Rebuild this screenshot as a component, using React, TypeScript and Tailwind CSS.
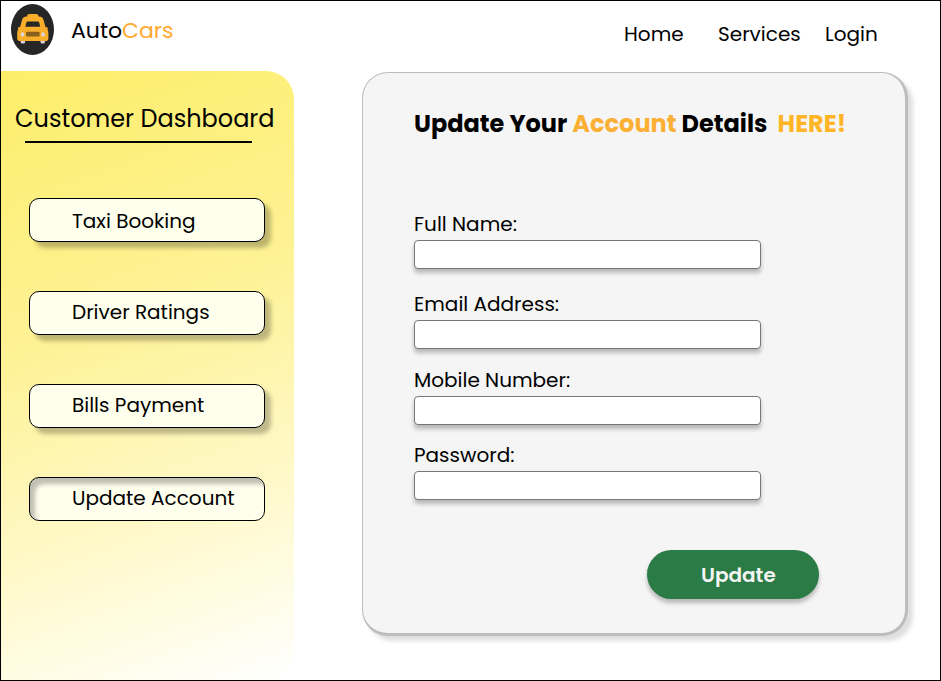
import React from "react";

const menu = [
  { label: "Taxi Booking", text: "pt-[2px]" },
  { label: "Driver Ratings", text: "" },
  { label: "Bills Payment", text: "" },
  { label: "Update Account", text: "", active: true },
];

const fields = [
  { label: "Full Name:", name: "fullName", type: "text", gap: "" },
  { label: "Email Address:", name: "email", type: "email", gap: "mt-[21px]" },
  { label: "Mobile Number:", name: "mobile", type: "tel", gap: "mt-[17px]" },
  { label: "Password:", name: "password", type: "password", gap: "mt-[16px]" },
];

function TaxiLogo() {
  return (
    <svg className="ml-[9px] mt-[2px] h-[52px] w-[44px] shrink-0" viewBox="0 0 44 52" aria-hidden="true">
      <ellipse cx="22.5" cy="26.5" rx="21.5" ry="25.4" fill="#262626" />
      <rect x="10.7" y="36" width="4.4" height="4.6" rx="1.6" fill="#d9d3e4" />
      <rect x="30.5" y="36" width="4.4" height="4.6" rx="1.6" fill="#d9d3e4" />
      <path
        d="M17.2 13.4V12.6Q17.4 11 19.2 11H26.4Q28.2 11 28.4 12.6V13.4H29.2Q32.4 13.4 33.4 16.6L35.6 24.6Q38.4 26.4 38.4 30.4V35.2Q38.4 38 35.6 38H10Q7.2 38 7.2 35.2V30.4Q7.2 26.4 10 24.6L12.2 16.6Q13.2 13.4 16.4 13.4Z"
        fill="#f9ae2b"
      />
      <circle cx="9.2" cy="25.2" r="1.2" fill="#f9ae2b" />
      <circle cx="36.4" cy="25.2" r="1.2" fill="#f9ae2b" />
      <path d="M18 18.4H27.6Q28.8 18.4 29.2 19.6L30.2 23.7H15.4L16.4 19.6Q16.8 18.4 18 18.4Z" fill="#262626" />
      <rect x="16" y="28.8" width="13.6" height="4.8" rx="0.8" fill="#87601d" />
      <ellipse cx="12.5" cy="31.4" rx="1.8" ry="2.2" fill="#ded6dc" />
      <ellipse cx="33.1" cy="31.4" rx="1.8" ry="2.2" fill="#ded6dc" />
    </svg>
  );
}

export default function App() {
  return (
    <div className="flex h-[681px] w-[941px] flex-col overflow-hidden border border-black bg-white font-['Poppins','Inter',sans-serif] text-black">
      <header className="flex h-[70px] shrink-0 items-start">
        <TaxiLogo />
        <div className="ml-[17px] mt-[16px] whitespace-nowrap text-[22px] leading-7">
          Auto<span className="text-[#ffa92f]">Cars</span>
        </div>
        <nav className="ml-auto mr-[62px] mt-[19px] flex whitespace-nowrap text-[20px] leading-[29px]">
          <a className="w-[94px]">Home</a>
          <a className="w-[107px]">Services</a>
          <a className="w-[53px]">Login</a>
        </nav>
      </header>

      <div className="flex min-h-0 flex-1">
        <aside className="w-[293px] shrink-0 rounded-r-[28px] bg-[linear-gradient(160deg,#fdee69_0%,#fef298_42%,#fffad2_76%,#ffffff_100%)]">
          <h1 className="ml-[14px] pt-[32px] whitespace-nowrap text-[24px] leading-8">Customer Dashboard</h1>
          <div className="ml-[24px] mt-[6px] h-[2px] w-[227px] bg-black" />
          <div className="ml-[28px] mt-[55px] flex flex-col gap-[49px]">
            {menu.map((item) => (
              <button
                key={item.label}
                className={
                  "h-[44px] w-[236px] rounded-[10px] border border-black bg-[#ffffee] pl-[42px] text-left " +
                  (item.active
                    ? "shadow-[inset_5px_6px_4px_rgba(0,0,0,0.25)]"
                    : "shadow-[6px_6px_4px_rgba(0,0,0,0.25)]")
                }
              >
                <span className={"block h-[42px] whitespace-nowrap text-[20px] leading-[41px] " + item.text}>{item.label}</span>
              </button>
            ))}
          </div>
        </aside>

        <main className="ml-[68px] mt-px h-[564px] w-[546px] rounded-[26px] border border-r-[3px] border-b-[3px] border-[#bdbdbd] bg-[#f5f5f5] pl-[51px] shadow-[5px_5px_4px_rgba(0,0,0,0.13)]">
          <h2 className="mt-[35px] whitespace-pre text-[24px] font-bold leading-8">
            Update Your <span className="text-[#fbb034]">Account</span> Details{"  "}
            <span className="text-[#ffb526]">HERE!</span>
          </h2>
          <form className="mt-[70px] flex w-[347px] flex-col">
            {fields.map((field) => (
              <label key={field.name} className={"flex flex-col " + field.gap}>
                <span className="h-[30px] whitespace-nowrap text-[20px] leading-[29px]">{field.label}</span>
                <input
                  name={field.name}
                  type={field.type}
                  className="h-[29px] w-full rounded-[4px] border border-[#777777] bg-white shadow-[0_4px_4px_rgba(0,0,0,0.25)]"
                />
              </label>
            ))}
          </form>
          <button className="ml-[233px] mt-[50px] block h-[49px] w-[172px] rounded-full bg-[#2a7b46] pl-[54px] text-left text-[20px] font-semibold leading-[50px] text-[#f4f4f4] shadow-[0_4px_4px_rgba(0,0,0,0.25)]">
            Update
          </button>
        </main>
      </div>
    </div>
  );
}
